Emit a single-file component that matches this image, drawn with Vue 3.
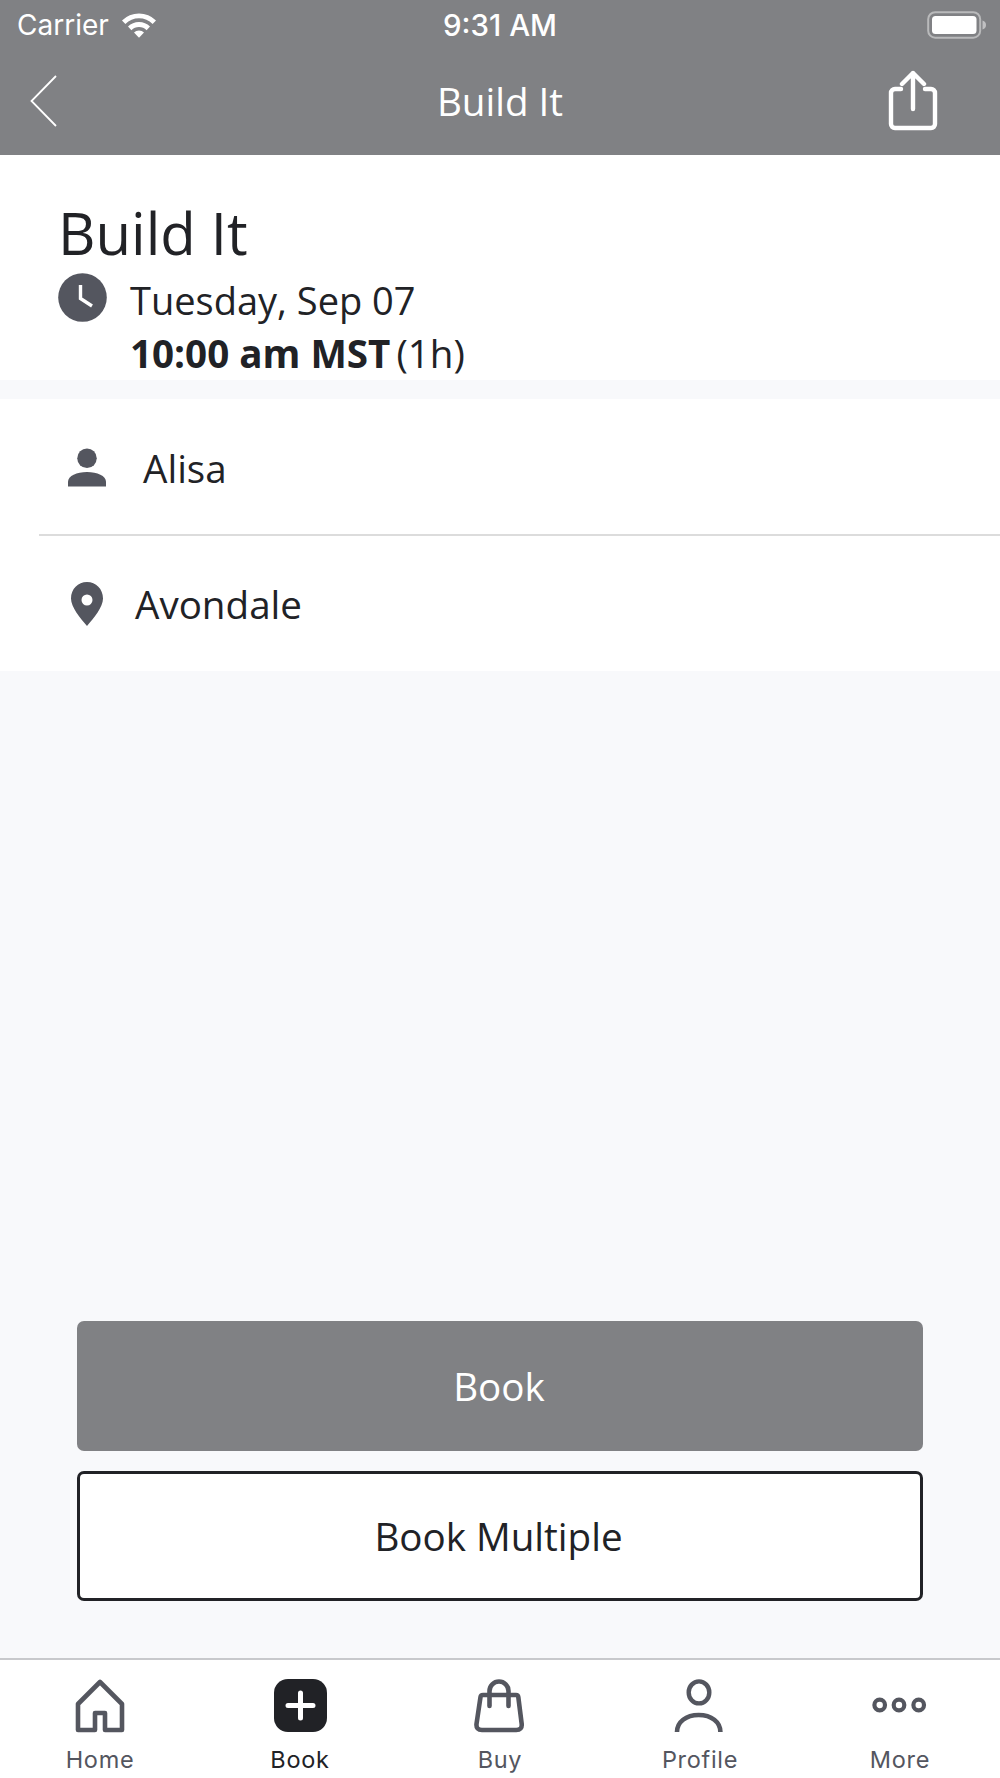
<template>
  <div class="screen">
    <header class="top">
      <div class="status">
        <span class="carrier">Carrier</span>
        <svg class="wifi" width="38" height="28" viewBox="0 0 38 28">
          <path d="M2 10.500a24 24 0 0 1 34 0l-3.400 3.600a19 19 0 0 0-27.200 0z" fill="#fff" />
          <path d="M8 16.600a15.500 15.500 0 0 1 22 0l-3.400 3.600a10.600 10.600 0 0 0-15.200 0z" fill="#fff" />
          <path d="M14 22.600a7 7 0 0 1 10 0l-5 5.200z" fill="#fff" />
        </svg>
        <span class="clock-text">9:31 AM</span>
        <svg class="battery" width="60" height="28" viewBox="0 0 60 28">
          <rect x="1.200" y="1.200" width="52" height="25.500" rx="7" fill="none" stroke="#fff" stroke-opacity=".45" stroke-width="2" />
          <rect x="5" y="5" width="44.500" height="18" rx="3.500" fill="#fff" />
          <path d="M55.500 9.500c2.500.8 3.500 2.500 3.500 4.500s-1 3.700-3.500 4.500z" fill="#fff" fill-opacity=".5" />
        </svg>
      </div>
      <div class="nav">
        <svg class="back" width="28" height="54" viewBox="0 0 28 54">
          <path d="M26 2 1.500 27 26 52" fill="none" stroke="#fff" stroke-width="1.800" />
        </svg>
        <span class="nav-title">Build It</span>
        <svg class="share" width="52" height="62" viewBox="0 0 52 62">
          <path d="M14 19H8a4 4 0 0 0-4 4v31a4 4 0 0 0 4 4h36a4 4 0 0 0 4-4V23a4 4 0 0 0-4-4h-6" fill="none" stroke="#fff" stroke-width="4.400" stroke-linecap="round" />
          <path d="M26 39V3M15 14 26 3l11 11" fill="none" stroke="#fff" stroke-width="4.400" stroke-linecap="round" stroke-linejoin="round" />
        </svg>
      </div>
    </header>

    <main class="content">
      <section class="summary">
        <h1 class="title">Build It</h1>
        <div class="when">
          <svg class="clock-icon" width="49" height="49" viewBox="0 0 49 49">
            <circle cx="24.500" cy="24.500" r="24.300" fill="#54565f" />
            <path d="M22.500 12v13.500l11.500 7.500" fill="none" stroke="#fff" stroke-width="3.400" />
          </svg>
          <div>
            <div class="date">Tuesday, Sep 07</div>
            <div class="time"><b>10:00 am MST</b><span class="duration">(1h)</span></div>
          </div>
        </div>
      </section>

      <section class="details">
        <div class="row row-staff">
          <svg width="38" height="39" viewBox="0 0 39 39">
            <circle cx="19.500" cy="10" r="10" fill="#54565f" />
            <path d="M0 39v-5c0-6 9-10 19.500-10S39 28 39 34v5z" fill="#54565f" />
          </svg>
          <span>Alisa</span>
        </div>
        <div class="row row-place">
          <svg width="32" height="44" viewBox="0 0 32 44">
            <path fill-rule="evenodd" d="M16 0c9 0 16 7 16 16.500C32 25 23 36 16 44 9 36 0 25 0 16.500 0 7 7 0 16 0zm0 12.500a5.500 5.500 0 1 0 0 11 5.500 5.500 0 0 0 0-11z" fill="#54565f" />
          </svg>
          <span>Avondale</span>
        </div>
      </section>

      <div class="actions">
        <button class="btn btn-primary">Book</button>
        <button class="btn btn-outline">Book Multiple</button>
      </div>
    </main>

    <nav class="tabs">
      <div class="tab">
        <svg width="60" height="60" viewBox="0 0 60 60">
          <path d="M8 28 30 6l22 22v26H35V37H25v17H8z" fill="none" stroke="#54565f" stroke-width="4.600" stroke-linejoin="round" />
        </svg>
        <span>Home</span>
      </div>
      <div class="tab tab-active">
        <svg width="60" height="60" viewBox="0 0 60 60">
          <rect x="4" y="3" width="53" height="53" rx="14" fill="#212226" />
          <path d="M30.500 17v25M18 29.500h25" fill="none" stroke="#fff" stroke-width="5" stroke-linecap="round" />
        </svg>
        <span>Book</span>
      </div>
      <div class="tab">
        <svg width="60" height="60" viewBox="0 0 60 60">
          <path d="M13 19h33q2 0 2.300 2l3.400 27q.5 6-5.500 6H12q-6 0-5.500-6l4-27q.3-2 2.500-2z" fill="none" stroke="#54565f" stroke-width="4.600" />
          <path d="M19.500 30V15a9.500 9.500 0 0 1 19 0v15" fill="none" stroke="#54565f" stroke-width="4.600" stroke-linecap="round" />
        </svg>
        <span>Buy</span>
      </div>
      <div class="tab">
        <svg width="60" height="60" viewBox="0 0 60 60">
          <ellipse cx="29" cy="16.400" rx="10.300" ry="11" fill="none" stroke="#54565f" stroke-width="4.400" />
          <path d="M7 56c0-10 9-17 21.700-17S50.400 46 50.400 56" fill="none" stroke="#54565f" stroke-width="4.600" />
        </svg>
        <span>Profile</span>
      </div>
      <div class="tab">
        <svg width="60" height="60" viewBox="0 0 60 60">
          <circle cx="9.700" cy="29" r="5.300" fill="none" stroke="#54565f" stroke-width="4.200" />
          <circle cx="29" cy="29" r="5.300" fill="none" stroke="#54565f" stroke-width="4.200" />
          <circle cx="48.700" cy="29" r="5.300" fill="none" stroke="#54565f" stroke-width="4.200" />
        </svg>
        <span>More</span>
      </div>
    </nav>
  </div>
</template>

<script setup>
</script>

<style scoped>
.screen {
  height: 1778px;
  display: flex;
  flex-direction: column;
  background: #f8f9fb;
  color: #212226;
  font-family: "Open Sans", sans-serif;
  overflow: hidden;
}

.top {
  height: 155px;
  background: #808184;
  color: #fff;
  flex-shrink: 0;
}

.status {
  position: relative;
  height: 50px;
  display: flex;
  align-items: center;
  padding-left: 17px;
  font-family: Inter, sans-serif;
  font-size: 28px;
}

.wifi {
  margin-left: 11px;
  margin-top: -2px;
}

.clock-text {
  position: absolute;
  left: 0;
  right: 0;
  text-align: center;
  font-size: 29.500px;
  font-weight: 500;
}

.battery {
  margin-left: auto;
  margin-right: 13px;
}

.nav {
  height: 105px;
  display: flex;
  align-items: center;
  justify-content: space-between;
  position: relative;
  padding: 0 61px 0 30px;
}

.back {
  margin-top: -3px;
}

.nav-title {
  position: absolute;
  left: 0;
  right: 0;
  text-align: center;
  font-size: 38.600px;
  margin-top: -3px;
}

.share {
  margin-top: -3px;
}

.content {
  flex: 1;
  display: flex;
  flex-direction: column;
}

.summary {
  height: 225px;
  background: #fff;
  padding-left: 58px;
  overflow: hidden;
}

.title {
  margin: 0;
  padding-top: 50px;
  font-size: 58px;
  line-height: 56px;
  font-weight: 400;
}

.when {
  display: flex;
  gap: 24px;
  margin-top: 12px;
}

.clock-icon {
  flex-shrink: 0;
}

.date,
.time {
  font-size: 38.600px;
  line-height: 53px;
}

.date {
  margin-top: 1px;
  margin-left: -1px;
  font-size: 38px;
}

.time {
  margin-left: -1px;
}

.time b {
  font-weight: 700;
}

.duration {
  margin-left: 6px;
}

.details {
  margin-top: 19px;
  height: 272px;
  background: #fff;
  padding-left: 39px;
}

.row {
  display: flex;
  align-items: center;
  font-size: 38.600px;
}

.row-staff {
  box-sizing: border-box;
  border-bottom: 2px solid #dcdcdc;
  height: 137px;
  padding-top: 2px;
  padding-left: 29px;
  gap: 37px;
}

.row-place {
  height: 135px;
  padding-left: 32px;
  gap: 32px;
}

.actions {
  margin-top: auto;
  padding: 0 77px 57px;
  display: flex;
  flex-direction: column;
  gap: 20px;
}

.btn {
  height: 130px;
  border-radius: 7px;
  font-family: "Open Sans", sans-serif;
  font-size: 38.600px;
}

.btn-primary {
  border: none;
  padding: 0 2px 0 0;
  background: #808184;
  color: #fff;
}

.btn-outline {
  border: 3px solid #212226;
  padding: 0 3px 0 0;
  background: #fff;
  color: #212226;
}

.tabs {
  height: 118px;
  flex-shrink: 0;
  background: #fff;
  border-top: 2px solid #c8c9cc;
  display: grid;
  grid-template-columns: repeat(5, 200px);
  font-family: Inter, sans-serif;
  font-size: 23.500px;
  letter-spacing: .7px;
  color: #54565f;
}

.tab {
  display: flex;
  flex-direction: column;
  align-items: center;
  padding-top: 16px;
}

.tab svg {
  display: block;
}

.tab span {
  line-height: 28px;
  margin-top: 10px;
}

.tab-active {
  color: #212226;
}
</style>

<style>
html,
body {
  margin: 0;
  background: #fff;
}
</style>
